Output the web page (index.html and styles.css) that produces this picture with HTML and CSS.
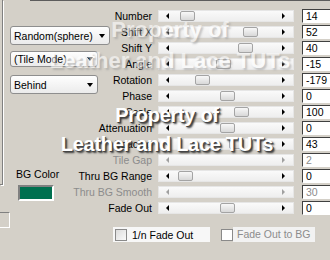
FILE: index.html
```html
<!DOCTYPE html>
<html lang="en">
<head>
  <meta charset="UTF-8">
  <title>Tile settings</title>
  <link rel="stylesheet" href="styles.css">
</head>
<body>
  <div class="page">
    <div class="left">
      <div class="upper">
        <div class="group-edge"></div>
        <div class="controls">
          <div class="combo wide"><span>Random(sphere)</span><i class="drop"></i></div>
          <div class="combo short"><span>(Tile Mode)</span><i class="drop"></i></div>
          <div class="combo"><span>Behind</span><i class="drop"></i></div>
          <div class="bgcolor">
            <div class="bg-label">BG Color</div>
            <div class="swatch"></div>
          </div>
        </div>
      </div>
      <div class="frame-corner"></div>
    </div>

    <div class="panel">
      <div class="sliders">
        <div class="row"><div class="lbl">Number</div><div class="track"><i class="arr-l"></i><b class="thumb" style="left:21px"></b><i class="arr-r"></i></div><div class="val">14</div></div>
        <div class="row"><div class="lbl">Shift X</div><div class="track"><i class="arr-l"></i><b class="thumb" style="left:84px"></b><i class="arr-r"></i></div><div class="val">52</div></div>
        <div class="row"><div class="lbl">Shift Y</div><div class="track"><i class="arr-l"></i><b class="thumb" style="left:79px"></b><i class="arr-r"></i></div><div class="val">40</div></div>
        <div class="row"><div class="lbl">Angle</div><div class="track"><i class="arr-l"></i><b class="thumb" style="left:57px"></b><i class="arr-r"></i></div><div class="val">-15</div></div>
        <div class="row"><div class="lbl">Rotation</div><div class="track"><i class="arr-l"></i><b class="thumb" style="left:36px"></b><i class="arr-r"></i></div><div class="val">-179</div></div>
        <div class="row"><div class="lbl">Phase</div><div class="track"><i class="arr-l"></i><b class="thumb" style="left:61px"></b><i class="arr-r"></i></div><div class="val">0</div></div>
        <div class="row"><div class="lbl">Scale</div><div class="track"><i class="arr-l"></i><b class="thumb" style="left:75px"></b><i class="arr-r"></i></div><div class="val">100</div></div>
        <div class="row"><div class="lbl">Attenuation</div><div class="track"><i class="arr-l"></i><b class="thumb" style="left:61px"></b><i class="arr-r"></i></div><div class="val">0</div></div>
        <div class="row"><div class="lbl">Spacing</div><div class="track"><i class="arr-l"></i><b class="thumb" style="left:70px"></b><i class="arr-r"></i></div><div class="val">43</div></div>
        <div class="row off"><div class="lbl">Tile Gap</div><div class="track"><i class="arr-l"></i><i class="arr-r"></i></div><div class="val">2</div></div>
        <div class="row"><div class="lbl">Thru BG Range</div><div class="track"><i class="arr-l"></i><b class="thumb" style="left:19px"></b><i class="arr-r"></i></div><div class="val">0</div></div>
        <div class="row off"><div class="lbl">Thru BG Smooth</div><div class="track"><i class="arr-l"></i><i class="arr-r"></i></div><div class="val">30</div></div>
        <div class="row"><div class="lbl">Fade Out</div><div class="track"><i class="arr-l"></i><b class="thumb" style="left:61px"></b><i class="arr-r"></i></div><div class="val">0</div></div>
      </div>

      <div class="checks">
        <label class="check first"><span class="box"></span><span class="text">1/n Fade Out</span></label>
        <label class="check second off"><span class="box"></span><span class="text">Fade Out to BG</span></label>
      </div>
    </div>

    <div class="watermark faded">
      <div>Property of</div>
      <div>Leather and Lace TUTs</div>
    </div>
    <div class="watermark crisp">
      <div>Property of</div>
      <div>Leather and Lace TUTs</div>
    </div>
  </div>
</body>
</html>
```

FILE: styles.css
```css
body {
  margin: 0;
  background: #d4d0c8;
  font-family: "Liberation Sans", Arial, sans-serif;
  font-size: 10.5px;
  color: #000;
  overflow: hidden;
}

.page {
  position: relative;
  display: flex;
  width: 330px;
  height: 260px;
  overflow: hidden;
}

/* thin dark edge along the top of the crop */
.page::before {
  content: "";
  position: absolute;
  top: 0;
  left: 30px;
  right: 0;
  height: 1px;
  background: #5c5c5c;
}

/* left side: combos and colour */
.left {
  flex: none;
  width: 112px;
}

.upper {
  display: flex;
  align-items: flex-start;
}

.group-edge {
  width: 2px;
  height: 184px;
  border-right: 1px solid #808080;
  border-bottom: 1px solid #808080;
  box-shadow: 1px 1px 0 #fff;
}

.controls {
  margin-left: 7px;
  padding-top: 26px;
}

.combo {
  box-sizing: border-box;
  width: 88px;
  height: 19px;
  display: flex;
  align-items: center;
  padding-left: 3px;
  border: 1px solid #8e8e8e;
  border-radius: 3px;
  background: linear-gradient(#fefefe, #ebebeb);
  white-space: nowrap;
}

.combo.wide {
  width: 100px;
}

.combo.short {
  height: 16px;
  margin-top: 6px;
}

.combo.short + .combo {
  margin-top: 8px;
}

.drop {
  margin-left: auto;
  margin-right: 4px;
  width: 0;
  height: 0;
  border-left: 3.5px solid transparent;
  border-right: 3.5px solid transparent;
  border-top: 4px solid #000;
}

.bgcolor {
  width: 42px;
  margin: 74px 0 0 6px;
}

.bg-label {
  line-height: 13px;
  text-align: center;
  white-space: nowrap;
}

.swatch {
  box-sizing: border-box;
  width: 36px;
  height: 16px;
  margin: 4px 0 0 2px;
  background: #00704f;
  border: 2px solid;
  border-color: #808080 #fff #fff #808080;
}

.frame-corner {
  width: 9px;
  height: 14px;
  margin-top: 11px;
  border-top: 1px solid #808080;
  border-right: 1px solid #fff;
  border-bottom: 1px solid #fff;
}

/* right side: slider rows */
.panel {
  flex: none;
  padding-top: 8px;
}

.row {
  display: flex;
  align-items: center;
  height: 16px;
}

.lbl {
  width: 40px;
  display: flex;
  justify-content: flex-end;
  white-space: nowrap;
}

.track {
  position: relative;
  box-sizing: border-box;
  width: 136px;
  height: 12px;
  margin-left: 6px;
  border: 1px solid #e6e6e6;
  background: linear-gradient(#fafafa, #eeeeee);
}

.arr-l,
.arr-r {
  position: absolute;
  top: 2px;
  width: 0;
  height: 0;
  border-top: 3.5px solid transparent;
  border-bottom: 3.5px solid transparent;
}

.arr-l {
  left: 7px;
  border-right: 3px solid #000;
}

.arr-r {
  right: 8px;
  border-left: 3px solid #000;
}

.thumb {
  position: absolute;
  top: 0;
  box-sizing: border-box;
  width: 15px;
  height: 10px;
  border: 1px solid #a4a4a4;
  border-radius: 2px;
  background: linear-gradient(#f8f8f8, #d8d8d8);
}

.val {
  box-sizing: border-box;
  width: 40px;
  height: 14px;
  margin-left: 8px;
  padding-left: 3px;
  line-height: 12px;
  background: #fff;
  border: 1px solid;
  border-color: #404040 #fff #fff #404040;
}

.off .lbl,
.off .val {
  color: #8c8c8c;
}

.off .arr-l {
  border-right-color: #a0a0a0;
}

.off .arr-r {
  border-left-color: #a0a0a0;
}

/* checkboxes */
.checks {
  display: flex;
  margin-top: 11px;
  height: 15px;
}

.check {
  display: flex;
  align-items: center;
}

.box {
  box-sizing: border-box;
  width: 12px;
  height: 12px;
  border: 1px solid #8a8a8a;
  background: linear-gradient(135deg, #dcdcdc, #fafafa);
}

.check.first {
  width: 97px;
  margin-left: 1px;
  padding-left: 2px;
  box-sizing: border-box;
  background: #f7f7f7;
}

.check.first .text {
  margin-left: 5px;
}

.check.second {
  margin-left: 11px;
}

.check.second .box {
  background: #fff;
}

.check.second .text {
  box-sizing: border-box;
  width: 82px;
  height: 15px;
  padding-left: 4px;
  line-height: 15px;
  background: #f2f2f2;
  color: #8c8c8c;
}

/* watermark over the dialog */
.watermark {
  position: absolute;
  left: 0;
  width: 334px;
  text-align: center;
  font-weight: bold;
  color: #fff;
  white-space: nowrap;
  pointer-events: none;
}

.watermark.faded {
  top: 14px;
  width: 340px;
  font-size: 22px;
  line-height: 31px;
  opacity: 0.55;
  text-shadow: 2px 2px 2px #9a9a9a;
}

.watermark.crisp {
  top: 101px;
  font-size: 20px;
  line-height: 29px;
  letter-spacing: -0.3px;
  text-shadow: 1px 1px 0 #444, 2px 2px 2px #333;
}
```
